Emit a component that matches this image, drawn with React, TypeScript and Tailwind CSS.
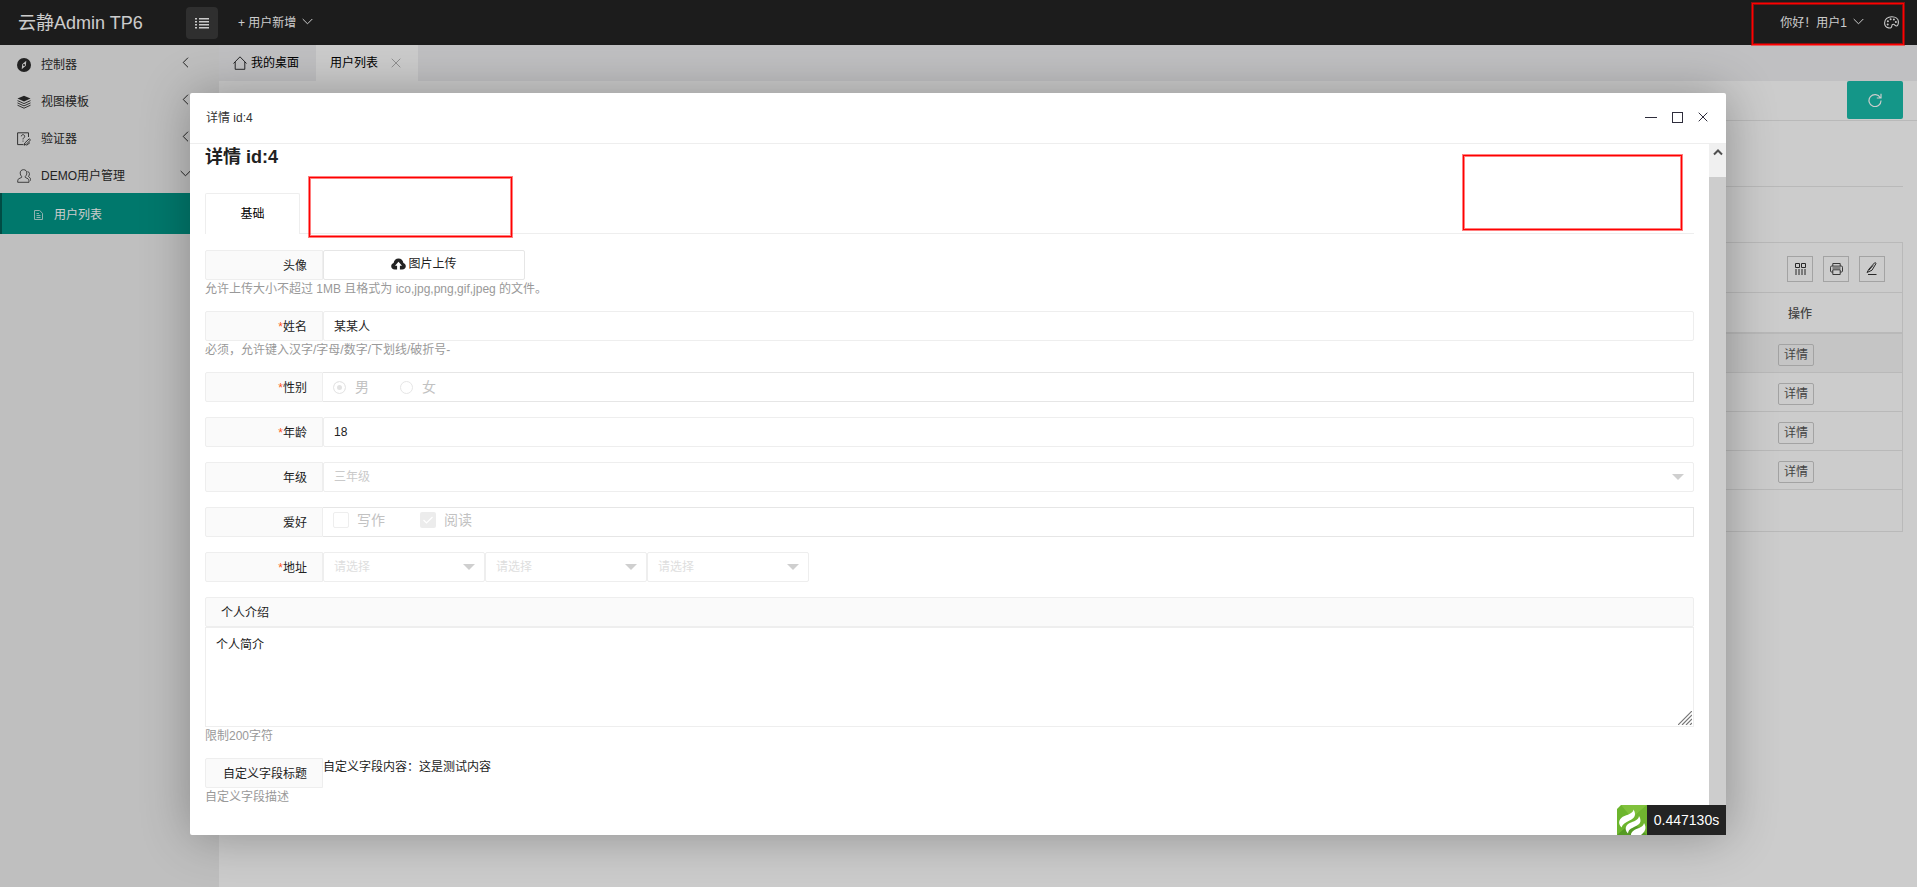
import React from 'react'

type IconProps = { className?: string }

const menu = [
    { name: '控制器', icon: CompassIcon, open: false },
    { name: '视图模板', icon: LayersIcon, open: false },
    { name: '验证器', icon: VerifyIcon, open: false },
    { name: 'DEMO用户管理', icon: UsersIcon, open: true },
]

const rows = [4, 3, 2, 1]

function ChevronIcon({ className }: IconProps) {
    return (
        <svg viewBox="0 0 11 7" className={`w-[11px] h-[7px] ${className}`} fill="none" stroke="currentColor">
            <path d="M.7 1l4.800 4.800L10.300 1" />
        </svg>
    )
}

function ListIcon() {
    return (
        <svg viewBox="0 0 14 12" className="w-3.5 h-3" fill="currentColor">
            <path d="M0 1h2v1.5H0zM4 1h10v1.5H4zM0 4h2v1.5H0zM4 4h10v1.5H4zM0 7h2v1.5H0zM4 7h10v1.5H4zM0 10h2v1.5H0zM4 10h10v1.5H4z" />
        </svg>
    )
}

function PaletteIcon() {
    return (
        <svg viewBox="0 0 15 13" className="w-[15px] h-[13px]" fill="none" stroke="currentColor" strokeWidth="1.100">
            <path d="M4.500 11.900C1.800 11.200.6 9.200.6 6.900.6 3.300 3.700.7 7.800.7c3.800 0 6.600 2 6.600 5.100 0 2.200-.7 4.200-2 4.200-1.500 0-1.600-1.700-3-1.700-1.200 0-1.600.8-1.600 1.800 0 1.600-1.400 2.300-3.300 1.800z" />
            <g fill="currentColor" stroke="none">
                <circle cx="3.700" cy="8.500" r="1" />
                <circle cx="3.900" cy="5.300" r="1" />
                <circle cx="6.600" cy="3.300" r="1" />
                <circle cx="9.900" cy="3.600" r="1" />
                <circle cx="11.900" cy="6" r="1" />
            </g>
        </svg>
    )
}

function CompassIcon() {
    return (
        <svg viewBox="0 0 14 14" className="w-3.5 h-3.5">
            <circle cx="7" cy="7" r="7" fill="currentColor" />
            <path d="M9.300 2.800L8.800 7.800 4.700 11.200 5.200 6.200z" fill="#efefef" />
            <circle cx="7" cy="7" r="1.100" fill="currentColor" />
        </svg>
    )
}

function LayersIcon() {
    return (
        <svg viewBox="0 0 14 14" className="w-3.5 h-3.5" fill="none" stroke="currentColor" strokeWidth=".9">
            <path d="M7 .8L13.5 3.6 7 6.6.5 3.6z" fill="currentColor" stroke="none" />
            <path d="M.5 5.6L7 8.6l6.500-3M.5 7.900L7 10.900l6.500-3M.5 10.200L7 13.200l6.500-3" />
        </svg>
    )
}

function VerifyIcon() {
    return (
        <svg viewBox="0 0 14 14" className="w-3.5 h-3.5" fill="none" stroke="currentColor" strokeWidth=".9">
            <path d="M11.500 5V.8H.6v11.800h5.900" />
            <path d="M4.300 4.300c0-2.200 3.400-2.100 3.400.1C7.700 5.800 6 5.800 6 7.400M6 8.600v1" />
            <path d="M12.200 6.800l1.300 1.200-4.300 4.300-2 .900.6-2.200zM9.500 13.400l3.500-2.800" />
        </svg>
    )
}

function UsersIcon() {
    return (
        <svg viewBox="0 0 14 14" className="w-3.5 h-3.5" fill="none" stroke="currentColor" strokeWidth=".8">
            <path d="M6.500.7c2.200 0 3.300 1.400 3.300 3.400 0 1.500-.7 2.600-1.500 3.300v1l2.700 1.400c.8.500 1 1.200 1 3.500H.7c0-2.300.2-3 1-3.500l2.900-1.400v-1C3.800 6.700 3.200 5.600 3.200 4.100 3.200 2.100 4.400.7 6.500.7z" />
            <path d="M10.500 2.500c2.200.2 2.600 3.300.9 5l1.500 1.200c.6.500.7 1.300.7 3" />
        </svg>
    )
}

function FileIcon() {
    return (
        <svg viewBox="0 0 9 10" className="w-[9px] h-2.5 opacity-70" fill="none" stroke="currentColor">
            <path d="M.5.5h5.200l2.800 2.800v6.200h-8zM2.500 3.500h2.500M2.500 5.500h4M2.500 7.500h4" />
        </svg>
    )
}

function HomeIcon() {
    return (
        <svg viewBox="0 0 14 14" className="w-3.5 h-3.5" fill="none" stroke="currentColor" strokeWidth=".8">
            <path d="M.5 7.500L7 .8l6.500 6.700M2.200 6v7.300h9.600V6" />
        </svg>
    )
}

function CloseIcon({ className }: IconProps) {
    return (
        <svg viewBox="0 0 10 10" className={className} fill="none" stroke="currentColor">
            <path d="M.7.7l8.600 8.600M9.300.7L.7 9.300" />
        </svg>
    )
}

function RefreshIcon() {
    return (
        <svg viewBox="0 0 14 14" className="w-3.5 h-3.5" fill="none" stroke="currentColor" strokeWidth="1.200">
            <path d="M12.300 4.800A6 6 0 1 0 13 7.500M13 .8v4.200H8.800" />
        </svg>
    )
}

function UploadIcon() {
    return (
        <svg viewBox="0 0 15 12" className="w-[15px] h-3">
            <path d="M3.800 11.500C1.600 11.500.2 10 .2 8.200c0-1.600 1-2.800 2.400-3.200C2.900 2.300 4.900.5 7.500.5s4.600 1.800 4.900 4.500c1.400.4 2.400 1.600 2.400 3.200 0 1.800-1.400 3.300-3.600 3.300z" fill="currentColor" />
            <path d="M7.500 3.800L11 7.800H8.900V12H6.100V7.800H4z" fill="#fff" />
        </svg>
    )
}

function ColsIcon() {
    return (
        <svg viewBox="0 0 13 12" className="w-[13px] h-3" fill="none" stroke="currentColor">
            <path d="M1.500.5h4v4h-4zM7.500.5h4v4h-4z" />
            <path d="M2 6v6M5 6v6M8 6v6M11 6v6" />
        </svg>
    )
}

function PrintIcon() {
    return (
        <svg viewBox="0 0 13 12" className="w-[13px] h-3" fill="none" stroke="currentColor" strokeWidth=".9">
            <path d="M2.800 3V.5h7.400V3M2.800 9H1.500C.9 9 .5 8.600.5 8V4.200c0-.7.4-1.100 1-1.100h10c.6 0 1 .4 1 1.100V8c0 .6-.4 1-1 1h-1.300" />
            <path d="M2.800 6.800h7.400v4.700H2.800zM2.500 5h8" />
        </svg>
    )
}

function PenIcon() {
    return (
        <svg viewBox="0 0 12 13" className="w-3 h-[13px]" fill="none" stroke="currentColor">
            <path d="M1 10.500L3 7 8.500.9c.8-.7 1.700 0 1.300 1L6 8.200zM3 8l4-4.500" />
            <path d="M2 12.500h8.500" />
        </svg>
    )
}

function ThinkLogo() {
    return (
        <svg viewBox="0 0 30 30" className="w-[30px] h-[30px] bg-white">
            <path d="M4 0h26v30H0V4z" fill="#6cb52d" />
            <path d="M4 0h26L15 13z" fill="#86c440" opacity=".8" />
            <path d="M30 0v30L15 13z" fill="#70b52f" />
            <path d="M0 30l15-13 15 13z" fill="#559a24" />
            <path d="M16.500 4.500c3.500 6 .5 9-4 11-4 2-7 3.500-8 7-4.500-5-2-9.500 3-11.500 5-2 8.500-3 9-6.500z" fill="#fff" />
            <path d="M22 11c3.500 6 .5 8.500-4 10.500-4 2-6.500 3-7 7C6.500 23.500 9 19.500 14 17.500s7.500-3 8-6.500z" fill="#fff" />
            <path d="M27 18c3 5 1 9-3 12H14c0-3 3-5 6-6.200 4-1.600 6.500-2.600 7-5.800z" fill="#fff" />
        </svg>
    )
}

// red frame drawn over everything else
function Mark({ className }: IconProps) {
    return <div className={`absolute pointer-events-none border border-[#ff0000] shadow-[0_0_0_1px_rgba(255,0,0,0.5),inset_0_0_0_1px_rgba(255,0,0,0.5)] ${className}`}></div>
}

function FormRow({ label, htmlFor, required, help, children }: { label: string, htmlFor?: string, required?: boolean, help?: string, children: React.ReactNode }) {
    return (
        <div className="mb-[15px]">
            <div className="flex items-start">
                <label htmlFor={htmlFor} className="w-[118px] h-[30px] shrink-0 rounded-l-xs border border-[#eeeeee] bg-[#fafafa] pr-[15px] text-right leading-[30px] whitespace-nowrap">
                    {required && <span className="text-[#ff5722]">*</span>}{label}
                </label>
                {children}
            </div>
            {help && <p className="h-4 leading-[18px] text-[#999999]">{help}</p>}
        </div>
    )
}

function SelectBox({ id, label, value, className, color }: { id: string, label: string, value: string, className: string, color: string }) {
    return (
        <div className={`relative ${className}`}>
            <select id={id} aria-label={label} disabled className={`block w-full h-[30px] appearance-none rounded-xs border border-[#eeeeee] bg-white px-2.5 opacity-100 ${color}`}>
                <option>{value}</option>
            </select>
            <span className="absolute right-2.5 top-3 border-x-6 border-t-6 border-x-transparent border-t-[#cfcfcf]"></span>
        </div>
    )
}

function Page() {
    return (
        <div className="min-h-screen flex flex-col">
            <header className="h-[45px] flex items-center bg-[#232323] text-white">
                <h1 className="w-[186px] pl-[18px] text-lg whitespace-nowrap">云静Admin TP6</h1>
                <button type="button" aria-label="菜单" className="w-8 h-8 flex items-center justify-center rounded-sm bg-[#3b3b3b]"><ListIcon /></button>
                <button type="button" className="ml-5 flex items-center gap-1.5">+ 用户新增 <ChevronIcon className="mb-0.5" /></button>
                <div className="ml-auto mr-[18px] flex items-center gap-5">
                    <button type="button" className="flex items-center gap-1.5">你好！用户1 <ChevronIcon className="mb-0.5" /></button>
                    <button type="button" aria-label="主题"><PaletteIcon /></button>
                </div>
            </header>

            <div className="flex grow">
                <nav className="w-[219px] shrink-0 bg-[#efefef] text-[#2b2b2b]">
                    {menu.map((item) => (
                        <a key={item.name} href="#" className="h-[37px] flex items-center pt-0.5 pl-[17px] pr-7">
                            <item.icon />
                            <span className="ml-2.5">{item.name}</span>
                            <ChevronIcon className={item.open ? 'ml-auto mb-1' : 'ml-auto mb-1 rotate-90'} />
                        </a>
                    ))}
                    <a href="#" className="h-[41px] flex items-center gap-[11px] border-l-2 border-[#006056] bg-[#009688] pt-0.5 pl-8 text-white">
                        <FileIcon />用户列表
                    </a>
                </nav>

                <main className="grow bg-white">
                    <div className="h-9 flex bg-[#f0f0f3] text-black">
                        <a href="#" className="w-[97px] flex items-center gap-1 pl-3.5"><HomeIcon />我的桌面</a>
                        <div className="w-[102px] flex items-center gap-[13px] bg-white pl-3.5">
                            <a href="#">用户列表</a>
                            <button type="button" aria-label="关闭标签" className="text-[#b5b5b5]"><CloseIcon className="block w-2.5 h-2.5" /></button>
                        </div>
                    </div>
                    <div className="h-10 flex justify-end items-start border-b border-[#e8e8e8] pr-3.5">
                        <button type="button" aria-label="刷新" className="w-14 h-[38px] flex items-center justify-center rounded-xs bg-[#19bcaa] text-white"><RefreshIcon /></button>
                    </div>
                    <div className="mx-3.5 h-[66px] border-b border-[#e8e8e8]"></div>
                    <div className="mx-3.5 mt-[55px] border border-[#e8e8e8]">
                        <div className="h-[50px] flex items-center justify-end gap-2.5 pt-0.5 pr-[17px] border-b border-[#e8e8e8] text-[#333333]">
                            <button type="button" aria-label="筛选列" className="w-[26px] h-[26px] flex items-center justify-center border border-[#cccccc]"><ColsIcon /></button>
                            <button type="button" aria-label="打印" className="w-[26px] h-[26px] flex items-center justify-center border border-[#cccccc]"><PrintIcon /></button>
                            <button type="button" aria-label="编辑" className="w-[26px] h-[26px] flex items-center justify-center border border-[#cccccc]"><PenIcon /></button>
                        </div>
                        <table className="w-full text-[#555555]">
                            <thead>
                                <tr className="h-10 border-b-2 border-[#e8e8e8]">
                                    <th></th>
                                    <th className="w-[204px] pt-0.5 font-medium">操作</th>
                                </tr>
                            </thead>
                            <tbody>
                                {rows.map((id, index) => (
                                    <tr key={id} className={index === 0 ? 'h-[39px] border-b border-[#e8e8e8] bg-[#f7f7f7]' : 'h-[39px] border-b border-[#e8e8e8]'}>
                                        <td></td>
                                        <td className="pt-1 text-center">
                                            <button type="button" className="mr-2 w-9 h-[22px] rounded-xs border border-[#cccccc]">详情</button>
                                        </td>
                                    </tr>
                                ))}
                            </tbody>
                        </table>
                        <div className="h-[41px]"></div>
                    </div>
                </main>
            </div>
        </div>
    )
}

function Detail() {
    return (
        <div role="dialog" aria-label="详情 id:4" className="relative w-full rounded-xs bg-white shadow-[1px_1px_50px_rgba(0,0,0,0.3)]">
            <div className="h-[51px] flex items-center border-b border-[#eeeeee] px-4 text-[#333333]">
                <h2>详情 id:4</h2>
                <div className="ml-auto mr-0.5 flex items-center gap-[15px] pb-0.5 text-[#2e2d3c]">
                    <button type="button" aria-label="最小化" className="w-3 h-px bg-[#2e2d3c]"></button>
                    <button type="button" aria-label="最大化" className="w-[11px] h-[11px] border border-[#2e2d3c]"></button>
                    <button type="button" aria-label="关闭"><CloseIcon className="block w-2.5 h-2.5" /></button>
                </div>
            </div>

            <div className="flex">
                <div className="grow px-[15px] pb-4">
                    <h3 className="text-lg leading-[26px] font-bold text-[#222222]">详情 id:4</h3>
                    <div className="mt-[23px] flex h-[41px] border-b border-[#eeeeee]">
                        <button type="button" className="h-[41px] w-[95px] border border-b-0 border-[#eeeeee] bg-white rounded-t-xs text-black">基础</button>
                    </div>

                    <form className="pt-4">
                        <FormRow label="头像" help="允许上传大小不超过 1MB 且格式为 ico,jpg,png,gif,jpeg 的文件。">
                            <button type="button" className="w-[202px] h-[30px] flex items-center justify-center gap-0.5 rounded-xs border border-[#e6e6e6] pb-0.5">
                                <UploadIcon />图片上传
                            </button>
                        </FormRow>
                        <FormRow label="姓名" htmlFor="name" required help="必须，允许键入汉字/字母/数字/下划线/破折号-">
                            <input id="name" type="text" readOnly value="某某人" className="grow h-[30px] rounded-xs border border-[#eeeeee] px-2.5 pb-0.5" />
                        </FormRow>
                        <FormRow label="性别" required>
                            <div className="grow h-[30px] flex items-center border border-l-0 border-[#e6e6e6] pl-2.5 text-sm text-[#c2c2c2]">
                                <label className="mr-[31px] flex items-center gap-[9px]">
                                    <input type="radio" name="sex" disabled checked readOnly className="w-[13px] h-[13px] appearance-none rounded-full border border-[#e6e6e6] checked:bg-[#e2e2e2] shadow-[inset_0_0_0_3px_#fff]" />男
                                </label>
                                <label className="flex items-center gap-[9px]">
                                    <input type="radio" name="sex" disabled className="w-[13px] h-[13px] appearance-none rounded-full border border-[#e6e6e6]" />女
                                </label>
                            </div>
                        </FormRow>
                        <FormRow label="年龄" htmlFor="age" required>
                            <input id="age" type="text" readOnly value="18" className="grow h-[30px] rounded-xs border border-[#eeeeee] px-2.5" />
                        </FormRow>
                        <FormRow label="年级" htmlFor="grade">
                            <SelectBox id="grade" label="年级" value="三年级" className="grow" color="text-[#cacaca]" />
                        </FormRow>
                        <FormRow label="爱好">
                            <div className="grow h-[30px] flex items-start border border-l-0 border-[#e6e6e6] pt-1 pl-2.5 text-sm leading-4 text-[#c2c2c2]">
                                <label className="mr-[35px] flex items-center gap-2">
                                    <input type="checkbox" disabled className="w-4 h-4 appearance-none rounded-xs border border-[#eeeeee]" />写作
                                </label>
                                <label className="relative flex items-center gap-2">
                                    <input type="checkbox" disabled checked readOnly className="w-4 h-4 appearance-none rounded-xs bg-[#ececec]" />阅读
                                    <svg viewBox="0 0 16 16" className="absolute left-0 w-4 h-4" fill="none" stroke="#fff" strokeWidth="1.200"><path d="M3.500 8l3 3 6-6" /></svg>
                                </label>
                            </div>
                        </FormRow>
                        <FormRow label="地址" htmlFor="province" required>
                            <SelectBox id="province" label="省" value="请选择" className="w-[162px]" color="text-[#dedede]" />
                            <SelectBox id="city" label="市" value="请选择" className="w-[162px]" color="text-[#dedede]" />
                            <SelectBox id="area" label="区" value="请选择" className="w-[162px]" color="text-[#dedede]" />
                        </FormRow>

                        <div className="mb-[15px]">
                            <label htmlFor="intro" className="block h-[30px] rounded-xs border border-[#eeeeee] bg-[#fafafa] px-[15px] leading-[30px]">个人介绍</label>
                            <div className="relative">
                                <textarea id="intro" readOnly value="个人简介" className="block w-full h-[100px] resize-none border border-[#eeeeee] px-2.5 py-[7px] leading-5"></textarea>
                                <svg viewBox="0 0 14 14" className="absolute right-0.5 bottom-0.5 w-3.5 h-3.5" stroke="#777" strokeWidth="1.200">
                                    <path d="M0 14L14 0M4 14L14 4M8 14l6-6M12 14l2-2" />
                                </svg>
                            </div>
                            <p className="h-4 leading-[18px] text-[#999999]">限制200字符</p>
                        </div>

                        <FormRow label="自定义字段标题" help="自定义字段描述">
                            <div className="leading-[18px]">自定义字段内容：这是测试内容</div>
                        </FormRow>
                    </form>
                </div>
                <div className="w-[17px] shrink-0 bg-[#cdcdcd]">
                    <div className="h-[33px] flex justify-center bg-[#f0f0f0] pt-1 text-[#505050]">
                        <svg viewBox="0 0 10 8" className="w-2.5 h-2" fill="none" stroke="currentColor" strokeWidth="2"><path d="M1 6.500l4-4 4 4" /></svg>
                    </div>
                </div>
            </div>

            <div className="absolute right-0 bottom-0 flex text-white">
                <ThinkLogo />
                <span className="w-[79px] bg-[#232323] text-center text-sm leading-[30px]">0.447130s</span>
            </div>
        </div>
    )
}

export default function App() {
    return (
        <div className="relative text-xs text-[#222222] font-['Liberation_Sans','Noto_Sans_CJK_SC',sans-serif]">
            <Page />
            <div className="absolute inset-0 flex items-start overflow-hidden bg-black/20 pt-[93px] pl-[190px] pr-[191px]">
                <Detail />
            </div>
            <Mark className="right-[13px] top-[3px] w-[152px] h-[42px]" />
            <Mark className="left-[309px] top-[177px] w-[203px] h-[60px]" />
            <Mark className="right-[235px] top-[155px] w-[219px] h-[75px]" />
        </div>
    )
}
